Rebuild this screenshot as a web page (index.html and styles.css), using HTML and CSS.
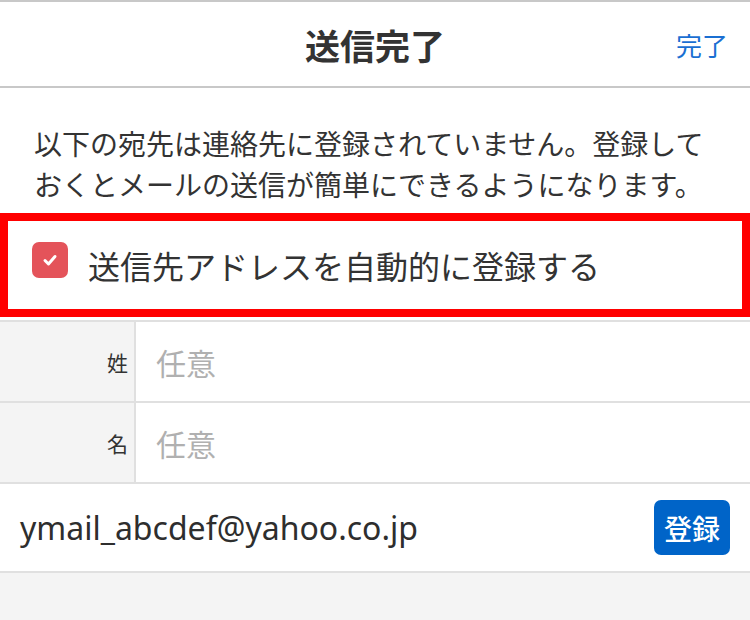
FILE: index.html
```html
<!DOCTYPE html>
<html lang="ja">
<head>
    <meta charset="UTF-8">
    <meta name="viewport" content="width=device-width, initial-scale=1.0">
    <title>送信完了</title>
    <link rel="stylesheet" href="styles.css">
</head>
<body>

<header class="nav">
    <span></span>
    <h1 class="nav-title">送信完了</h1>
    <a href="#" class="nav-done">完了</a>
</header>

<div class="notice">
    <p>以下の宛先は連絡先に登録されていません。登録して<br>おくとメールの送信が簡単にできるようになります。</p>
</div>

<div class="auto-wrap">
    <label class="auto-reg" for="autoReg">
        <input type="checkbox" id="autoReg" checked>
        <span class="check-box">
            <svg width="36" height="36" viewBox="0 0 36 36">
                <polyline points="13,18.5 16.5,22 23,14.5" fill="none" stroke="#fff" stroke-width="3" stroke-linecap="round" stroke-linejoin="round"/>
            </svg>
        </span>
        <span>送信先アドレスを自動的に登録する</span>
    </label>
</div>

<div class="name-table">
    <div class="name-row">
        <label for="lastName" class="name-label">姓</label>
        <input type="text" id="lastName" class="name-input" placeholder="任意">
    </div>
    <div class="name-row">
        <label for="firstName" class="name-label">名</label>
        <input type="text" id="firstName" class="name-input" placeholder="任意">
    </div>
</div>

<div class="address-row">
    <span class="address">ymail_abcdef@yahoo.co.jp</span>
    <button type="button" class="reg-btn">登録</button>
</div>

</body>
</html>
```

FILE: styles.css
```css
body {
    font-family: "Noto Sans CJK JP", sans-serif;
    background-color: #f4f4f4;
    color: #333;
    margin: 0;
}

/* top bar */
.nav {
    display: grid;
    grid-template-columns: 1fr auto 1fr;
    align-items: center;
    height: 84px;
    background-color: #fff;
    border-top: 2px solid #c8c8c8;
    border-bottom: 2px solid #c8c8c8;
    padding: 0 22px;
}

.nav-title {
    margin: 0;
    font-size: 35px;
    font-weight: bold;
    color: #333;
}

.nav-done {
    justify-self: end;
    font-size: 26px;
    color: #1a6fd2;
    text-decoration: none;
}

.notice {
    background-color: #fff;
    padding: 35px 34px 8px;
}

.notice p {
    margin: 0;
    font-size: 28px;
    line-height: 41px;
}

/* auto register checkbox */
.auto-wrap {
    background-color: #fff;
    padding-bottom: 3px;
}

.auto-reg {
    display: flex;
    align-items: center;
    height: 88px;
    border: 8px solid #ff0000;
    padding-left: 24px;
    font-size: 32px;
    cursor: pointer;
}

.auto-reg input[type="checkbox"] {
    display: none;
}

.check-box {
    width: 36px;
    height: 36px;
    border-radius: 7px;
    background-color: #e4535a;
    margin-right: 20px;
    margin-bottom: 10px;
}

.check-box svg {
    display: block;
}

/* name fields */
.name-table {
    border-top: 2px solid #e0e0e0;
}

.name-row {
    display: flex;
    height: 79px;
    border-bottom: 2px solid #e0e0e0;
}

.name-label {
    width: 128px;
    padding-right: 6px;
    background-color: #f4f4f4;
    border-right: 2px solid #e0e0e0;
    display: flex;
    align-items: center;
    justify-content: flex-end;
    font-size: 21px;
}

.name-input {
    flex: 1;
    border: none;
    outline: none;
    background-color: #fff;
    padding: 0 0 0 20px;
    font-family: "Noto Sans CJK JP", sans-serif;
    font-size: 30px;
    color: #333;
}

.name-input::placeholder {
    color: #b0b0b0;
}

/* address row */
.address-row {
    display: flex;
    align-items: center;
    justify-content: space-between;
    height: 87px;
    background-color: #fff;
    border-bottom: 2px solid #e0e0e0;
    padding: 0 20px;
}

.address {
    font-family: "Noto Sans", "Noto Sans CJK JP", sans-serif;
    font-size: 32px;
    color: #2e2e2e;
}

.reg-btn {
    width: 76px;
    height: 55px;
    background-color: #0064c8;
    color: #fff;
    border: none;
    border-radius: 7px;
    font-family: "Noto Sans CJK JP", sans-serif;
    font-size: 28px;
    font-weight: 500;
    padding: 0;
    cursor: pointer;
}
```
